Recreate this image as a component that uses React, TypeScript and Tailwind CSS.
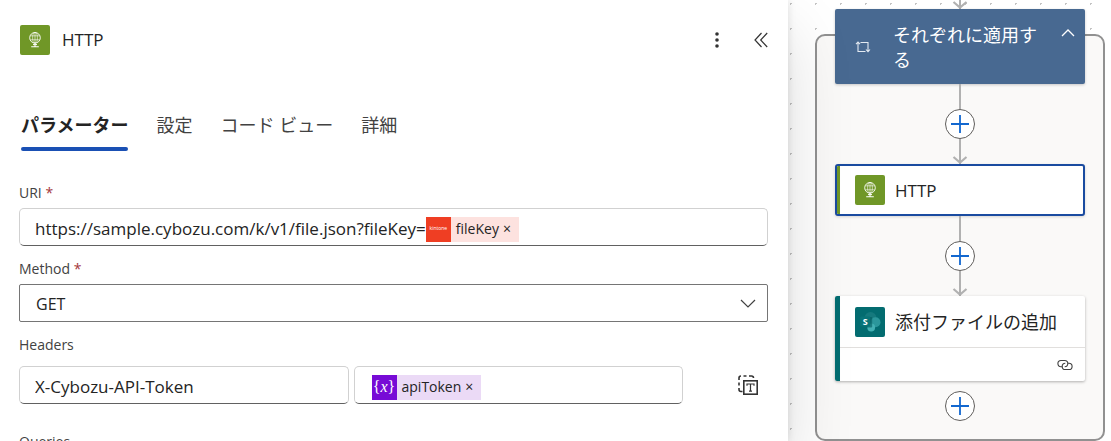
import React, { useState } from 'react';

interface Tab {
  id: string;
  label: string;
}

const tabs: Tab[] = [
  { id: 'parameters', label: 'パラメーター' },
  { id: 'settings', label: '設定' },
  { id: 'code', label: 'コード ビュー' },
  { id: 'about', label: '詳細' },
];

const fieldClass =
  'flex h-[38px] min-w-0 items-center rounded-[5px] border border-[#d1d1d1] border-b-[#616161] bg-white pt-1 pl-[15px] text-[17px] text-[#242424]';
const labelClass = 'block h-5 text-sm leading-5 text-[#424242]';

// Green tile with the globe, used for HTTP actions
function HttpIcon() {
  return (
    <svg viewBox="0 0 30 30" className="h-[30px] w-[30px] shrink-0" aria-hidden="true">
      <rect width="30" height="30" rx="2" fill="#709727" />
      <g fill="none" stroke="#fff" strokeWidth="0.9">
        <circle cx="15" cy="12.8" r="5.3" />
        <ellipse cx="15" cy="12.8" rx="2.4" ry="5.3" strokeWidth="0.6" />
        <path d="M10.3 10.8h9.4M10.3 14.8h9.4M15 7.5v10.6" strokeWidth="0.6" />
        <path d="M15 18v3.5M11.2 21.7h7.600" strokeWidth="1.100" />
        <path d="M13 19.6h4" strokeWidth="1" />
      </g>
    </svg>
  );
}

function SharePointIcon() {
  return (
    <svg viewBox="0 0 30 30" className="h-[30px] w-[30px] shrink-0" aria-hidden="true">
      <rect width="30" height="30" rx="2" fill="#036c70" />
      <circle cx="15.500" cy="11" r="6" fill="#15797d" />
      <circle cx="20.500" cy="15.200" r="5" fill="#2b979b" />
      <circle cx="16.200" cy="20.500" r="3.900" fill="#43b0b3" />
      <path d="M11 10h5.200a1 1 0 0 1 1 1v8.500a1 1 0 0 1-1 1H12z" fill="#025a5e" opacity="0.6" />
      <rect x="5.200" y="9.500" width="10" height="10" rx="1" fill="#087377" />
      <text x="10.200" y="17.800" textAnchor="middle" fontSize="9" fontWeight="700" fill="#fff">S</text>
    </svg>
  );
}

function LoopIcon() {
  return (
    <svg viewBox="0 0 16 14" className="h-[14px] w-4 shrink-0" fill="none" stroke="#e3eaf2" strokeWidth="1.1" aria-hidden="true">
      <path d="M3 2v9.500h7.500M1 4.200 3 2l2 2.200" />
      <path d="M5.500 2.500H13v9M11 9.500l2 2.200 2-2.200" />
    </svg>
  );
}

function TextModeIcon() {
  return (
    <svg viewBox="0 0 20 20" className="h-5 w-5" fill="none" stroke="#333" strokeWidth="1.6" aria-hidden="true">
      <path d="M1 5V3a2 2 0 0 1 2-2M5.500 1h3M11 1h2.500a2 2 0 0 1 2 2M1 7.500v3M1 13v1.500a2 2 0 0 0 2 2h1.500" />
      <rect x="5.800" y="5.800" width="13.400" height="13.400" />
      <path d="M9 10.800V9h7v1.800M12.500 9v7.300M11 16.200h3" strokeWidth="1.200" />
    </svg>
  );
}

function LinkIcon() {
  return (
    <svg viewBox="0 0 16 12" className="h-3 w-4" fill="none" stroke="#424242" strokeWidth="1.100" aria-hidden="true">
      <path d="M5.300 7.700H4A3 3 0 0 1 4 1.500h3.700a3.100 3.100 0 0 1 0 6.200" />
      <path d="M10.800 4.300H12a3 3 0 0 1 0 6.200H8.300a3.100 3.100 0 0 1 0-6.200" />
    </svg>
  );
}

function TokenChip({ name, tile, className }: { name: string; tile: React.ReactNode; className: string }) {
  return (
    <span className={`flex h-[25px] shrink-0 items-center pr-2 text-sm ${className}`}>
      {tile}
      <span className="ml-[5px]">{name}</span>
      <button type="button" aria-label={`${name} を削除`} className="ml-1 text-sm leading-none">×</button>
    </span>
  );
}

function Arrow({ className }: { className: string }) {
  return (
    <div className={`flex w-4 flex-col items-center ${className}`}>
      <div className="w-[2px] flex-1 bg-[#b1b1b1]" />
      <svg viewBox="0 0 16 8" className="-mt-2 h-2 w-4" fill="none" stroke="#b1b1b1" strokeWidth="2.200" aria-hidden="true">
        <path d="M1.500 1 8 6.500 14.500 1" />
      </svg>
    </div>
  );
}

function AddButton() {
  return (
    <button type="button" aria-label="アクションの追加" className="flex h-[30px] w-[30px] items-center justify-center rounded-full border border-[#605e5c] bg-white">
      <svg viewBox="0 0 18 18" className="h-[18px] w-[18px]" stroke="#1267cf" strokeWidth="1.800" aria-hidden="true">
        <path d="M9 0v18M0 9h18" />
      </svg>
    </button>
  );
}

function Connector() {
  return (
    <div className="flex flex-col items-center">
      <div className="h-[25px] w-[2px] bg-[#b1b1b1]" />
      <AddButton />
      <Arrow className="h-[25px]" />
    </div>
  );
}

export default function App() {
  const [activeTab, setActiveTab] = useState('parameters');
  const [uri, setUri] = useState('https://sample.cybozu.com/k/v1/file.json?fileKey=');
  const [headerKey, setHeaderKey] = useState('X-Cybozu-API-Token');

  return (
    <div className="flex h-screen overflow-hidden bg-white font-['Open_Sans','Noto_Sans_CJK_JP',sans-serif] text-[#242424]">
      {/* Action details */}
      <main className="z-10 min-w-0 flex-1 bg-white pl-[19px] pr-5 pt-[25px] shadow-[0_32px_64px_rgba(0,0,0,0.14),0_0_8px_rgba(0,0,0,0.12)]">
        <header className="-mr-[5px] flex h-[30px] items-center pl-px">
          <HttpIcon />
          <h1 className="ml-3 flex-1 text-[17px] font-medium">HTTP</h1>
          <button type="button" aria-label="その他" className="flex h-6 w-6 items-center justify-center">
            <svg viewBox="0 0 4 18" className="h-[18px] w-1" fill="#333" aria-hidden="true">
              <circle cx="2" cy="3" r="1.800" />
              <circle cx="2" cy="9" r="1.800" />
              <circle cx="2" cy="15" r="1.800" />
            </svg>
          </button>
          <button type="button" aria-label="折りたたむ" className="ml-5 flex h-6 w-6 items-center justify-center">
            <svg viewBox="0 0 14 16" className="h-4 w-[14px]" fill="none" stroke="#333" strokeWidth="1.200" aria-hidden="true">
              <path d="M7.500 1 1 8l6.500 7M13.200 1 6.700 8l6.500 7" />
            </svg>
          </button>
        </header>

        <nav role="tablist" className="mt-[58px] flex gap-7 pl-[2px]">
          {tabs.map(tab => (
            <button
              key={tab.id}
              type="button"
              role="tab"
              aria-selected={activeTab === tab.id}
              onClick={() => setActiveTab(tab.id)}
              className={`flex flex-col whitespace-nowrap text-[18px] leading-6 ${
                activeTab === tab.id ? 'font-bold text-[#242424]' : 'text-[#424242]'
              }`}
            >
              {tab.label}
              <span className={`mt-[10px] h-1 w-full rounded-full ${activeTab === tab.id ? 'bg-[#1a50b4]' : ''}`} />
            </button>
          ))}
        </nav>

        <form className="mt-8">
          <label htmlFor="uri" className={labelClass}>
            URI <span className="text-[#a4373a]">*</span>
          </label>
          <div className={`${fieldClass} mt-[5px]`}>
            <input
              id="uri"
              value={uri}
              onChange={e => setUri(e.target.value)}
              className="min-w-0 outline-none [field-sizing:content]"
            />
            <TokenChip
              name="fileKey"
              className="bg-[#fde2df]"
              tile={<span className="flex h-[25px] w-[25px] items-center justify-center bg-[#ef3e23] text-[5px] text-white">kintone</span>}
            />
          </div>

          <label htmlFor="method" className={`${labelClass} mt-[13px]`}>
            Method <span className="text-[#a4373a]">*</span>
          </label>
          <div className="relative mt-[5px]">
            <select id="method" defaultValue="GET" className="h-[38px] w-full appearance-none rounded-[2px] border border-[#757575] bg-white pl-4 pt-[2px] text-base">
              <option>GET</option>
              <option>POST</option>
              <option>PUT</option>
              <option>PATCH</option>
              <option>DELETE</option>
            </select>
            <svg viewBox="0 0 16 9" className="pointer-events-none absolute right-3 top-[15px] h-[9px] w-4" fill="none" stroke="#424242" strokeWidth="1.200" aria-hidden="true">
              <path d="M1 1l7 7 7-7" />
            </svg>
          </div>

          <label htmlFor="header-key" className={`${labelClass} mt-[13px]`}>Headers</label>
          <div className="mt-[11px] flex gap-[5px]">
            <div className={`${fieldClass} flex-1`}>
              <input
                id="header-key"
                value={headerKey}
                onChange={e => setHeaderKey(e.target.value)}
                className="w-full min-w-0 outline-none"
              />
            </div>
            <div className={`${fieldClass} flex-1`}>
              <TokenChip
                name="apiToken"
                className="ml-[2px] bg-[#ebdaf6]"
                tile={
                  <span className="flex h-[25px] w-[25px] items-center justify-center bg-[#770bd6] font-['Liberation_Serif',serif] text-base text-white">
                    {'{'}<i>x</i>{'}'}
                  </span>
                }
              />
            </div>
            <button type="button" aria-label="テキスト モードに切り替える" className="flex w-20 items-center justify-end pr-[10px]">
              <TextModeIcon />
            </button>
          </div>

          <label className={`${labelClass} mt-7`}>Queries</label>
        </form>
      </main>

      {/* Flow canvas */}
      <aside className="w-[323px] shrink-0 bg-[radial-gradient(circle,#c4c4c4_1px,transparent_1px)] bg-[length:25px_25px] bg-[position:-10px_-9px] pl-[27px] pr-[6px]">
        <div className="flex h-[9px] justify-center">
          <Arrow className="h-[9px]" />
        </div>
        <section className="mt-[25px] flex h-[407px] flex-col items-center rounded-[10px] border-2 border-[#919191] bg-[#faf9f8]">
          <div className="-mt-[27px] flex h-[75px] w-[250px] shrink-0 items-center rounded-[2px] bg-[#486991] pl-5 text-white shadow-[0_1px_3px_rgba(0,0,0,0.2)]">
            <LoopIcon />
            <h2 className="ml-[22px] w-[150px] pt-[2px] text-[18px] leading-[25px]">それぞれに適用する</h2>
            <button type="button" aria-label="折りたたむ" className="ml-[18px] self-start pt-5">
              <svg viewBox="0 0 14 8" className="h-2 w-[14px]" fill="none" stroke="#fff" strokeWidth="1.300" aria-hidden="true">
                <path d="M1 7l6-6 6 6" />
              </svg>
            </button>
          </div>
          <Connector />
          <div className="flex h-[52px] w-[250px] shrink-0 overflow-hidden rounded-[3px] border-2 border-[#1a4ba0] bg-white shadow-[0_1px_3px_rgba(0,0,0,0.15)]">
            <div className="w-[3px] bg-[#709727]" />
            <div className="flex items-center pl-[15px]">
              <HttpIcon />
              <h2 className="ml-[10px] pt-[2px] text-[17px] font-medium">HTTP</h2>
            </div>
          </div>
          <Connector />
          <div className="flex h-[85px] w-[250px] shrink-0 overflow-hidden rounded-[2px] bg-white shadow-[0_1px_3px_rgba(0,0,0,0.3)]">
            <div className="w-[5px] bg-[#036c70]" />
            <div className="flex flex-1 flex-col">
              <div className="flex h-[52px] items-center border-b border-[#e1dfdd] pl-[15px]">
                <SharePointIcon />
                <h2 className="ml-[10px] whitespace-nowrap pt-[2px] text-[18px]">添付ファイルの追加</h2>
              </div>
              <div className="flex flex-1 items-center justify-end pr-3">
                <LinkIcon />
              </div>
            </div>
          </div>
          <div className="mt-[10px]">
            <AddButton />
          </div>
        </section>
      </aside>
    </div>
  );
}
